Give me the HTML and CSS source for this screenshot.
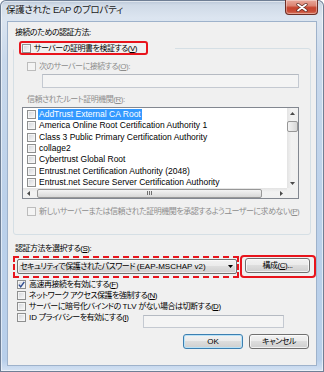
FILE: index.html
```html
<!DOCTYPE html>
<html lang="ja">
<head>
<meta charset="utf-8">
<link rel="stylesheet" href="styles.css">
</head>
<body>
<div class="window">
  <div class="titlebar">
    <span class="title">保護された EAP のプロパティ</span>
    <span class="close"><svg width="12" height="9" viewBox="0 0 12 9"><path d="M2 1.5 L10 7.5 M10 1.5 L2 7.5" stroke="#5a2a22" stroke-width="3.2" stroke-linecap="round"/><path d="M2 1.5 L10 7.5 M10 1.5 L2 7.5" stroke="#ffffff" stroke-width="1.8" stroke-linecap="round"/></svg></span>
  </div>
  <div class="client">
    <div class="caption">接続のための認証方法:</div>
    <div class="group">
      <div class="group-head">
        <div class="mark-solid head-mark">
          <span class="cb"></span><span class="txt">サーバーの証明書を検証する(<u>V</u>)</span>
        </div>
      </div>
      <div class="row in-group dis"><span class="cb dis"></span><span class="txt">次のサーバーに接続する(<u>O</u>):</span></div>
      <div class="input dis server-input"></div>
      <div class="sublabel dis">信頼されたルート証明機関(<u>R</u>):</div>
      <div class="list">
        <div class="list-main">
          <div class="items">
            <div class="item"><span class="cb"></span><span class="itxt sel">AddTrust External CA Root</span></div>
            <div class="item"><span class="cb"></span><span class="itxt">America Online Root Certification Authority 1</span></div>
            <div class="item"><span class="cb"></span><span class="itxt">Class 3 Public Primary Certification Authority</span></div>
            <div class="item"><span class="cb"></span><span class="itxt">collage2</span></div>
            <div class="item"><span class="cb"></span><span class="itxt">Cybertrust Global Root</span></div>
            <div class="item"><span class="cb"></span><span class="itxt">Entrust.net Certification Authority (2048)</span></div>
            <div class="item"><span class="cb"></span><span class="itxt">Entrust.net Secure Server Certification Authority</span></div>
          </div>
          <div class="vscroll">
            <span class="sbtn"><svg width="5" height="3" viewBox="0 0 5 3"><path d="M0 3 L2.5 0 L5 3Z" fill="#4a4a4a"/></svg></span>
            <span class="vthumb"></span>
            <span class="vtrack"></span>
            <span class="sbtn"><svg width="5" height="3" viewBox="0 0 5 3"><path d="M0 0 L2.5 3 L5 0Z" fill="#4a4a4a"/></svg></span>
          </div>
        </div>
        <div class="hscroll">
          <span class="sbtn h"><svg width="3" height="5" viewBox="0 0 3 5"><path d="M3 0 L0 2.5 L3 5Z" fill="#4a4a4a"/></svg></span>
          <span class="htrack"><span class="hthumb"><svg width="5" height="4" viewBox="0 0 5 4"><path d="M0.5 0V4M2.5 0V4M4.5 0V4" stroke="#6f6f6f" stroke-width="1"/></svg></span></span>
          <span class="sbtn h"><svg width="3" height="5" viewBox="0 0 3 5"><path d="M0 0 L3 2.5 L0 5Z" fill="#4a4a4a"/></svg></span>
          <span class="corner"></span>
        </div>
      </div>
      <div class="row in-group dis last"><span class="cb dis"></span><span class="txt">新しいサーバーまたは信頼された証明機関を承認するようユーザーに求めない(<u>P</u>)</span></div>
    </div>
    <div class="caption second">認証方法を選択する(<u>S</u>):</div>
    <div class="method-row">
      <div class="mark-dashed">
        <div class="combo"><span class="txt">セキュリティで保護されたパスワード <span class="lat">(EAP-MSCHAP v2)</span></span><svg class="drop" width="5" height="3" viewBox="0 0 5 3"><path d="M0 0 L2.5 3 L5 0Z" fill="#000"/></svg></div>
      </div>
      <div class="mark-solid btn-mark">
        <div class="btn conf">構成(<u>C</u>)...</div>
      </div>
    </div>
    <div class="row opt"><span class="cb"><svg width="7" height="7" viewBox="0 0 7 7"><path d="M0.8 3.6 L2.7 5.8 L6.3 0.8" stroke="#2f4c8f" stroke-width="1.4" fill="none"/></svg></span><span class="txt">高速再接続を有効にする(<u>F</u>)</span></div>
    <div class="row opt"><span class="cb"></span><span class="txt">ネットワーク アクセス保護を強制する(<u>N</u>)</span></div>
    <div class="row opt"><span class="cb"></span><span class="txt">サーバーに暗号化バインドの <span class="lat">TLV</span> がない場合は切断する(<u>D</u>)</span></div>
    <div class="row opt id-row"><span class="cb"></span><span class="txt"><span class="lat">ID</span> プライバシーを有効にする(<u>I</u>)</span><span class="input dis id-input"></span></div>
    <div class="buttons">
      <div class="btn default"><span class="lat">OK</span></div>
      <div class="btn">キャンセル</div>
    </div>
  </div>
</div>
</body>
</html>
```
FILE: styles.css
```css
* { box-sizing: border-box; margin: 0; padding: 0; }
html, body { width: 324px; height: 372px; overflow: hidden; }
body {
  background: #ffffff;
  font-family: "Liberation Sans", "Noto Sans CJK JP", sans-serif;
  font-size: 8px;
  letter-spacing: -0.5px;
  font-feature-settings: "palt";
  color: #000;
}
u { text-decoration: underline; text-underline-offset: 1px; }
.lat { letter-spacing: 0; }

.window {
  width: 324px;
  height: 372px;
  padding: 0 7px 6px 7px;
  display: flex;
  flex-direction: column;
  border-radius: 6px 6px 0 0;
  background: linear-gradient(to bottom, #b3c1d3 0px, #cfdae7 5px, #dce5f0 18px, #c9d9ec 60px, #bcd1ea 200px, #b8cfea 360px, #d6e3f3 372px);
  box-shadow: inset 0 0 0 1px #6f7f95, inset 0 0 0 2px rgba(255,255,255,0.55);
}

.titlebar {
  height: 21px;
  display: flex;
  align-items: flex-start;
}
.title {
  margin-left: -1px;
  line-height: 20px;
  font-size: 9.5px;
  letter-spacing: -0.3px;
  color: #1b1b1b;
  text-shadow: 0 0 6px rgba(255,255,255,0.9);
}
.close {
  margin-left: auto;
  margin-right: -1px;
  width: 33px;
  height: 15px;
  display: flex;
  align-items: center;
  justify-content: center;
  border: 1px solid #6d2e25;
  border-top: none;
  border-radius: 0 0 4px 4px;
  background: linear-gradient(to bottom, #e9a99b 0%, #dc8574 40%, #c6452f 55%, #c84c37 80%, #d9775f 100%);
  box-shadow: inset 0 0 0 1px rgba(255,255,255,0.35);
}

.client {
  flex: 1;
  background: #f0f0f0;
  border: 1px solid #9eb2cb;
  display: flex;
  flex-direction: column;
}

.caption {
  margin: 5px 0 0 7px;
  line-height: 12px;
  height: 12px;
}
.caption.second { margin-top: 8px; }

.group {
  margin: 9px 5px 0 5px;
  height: 187px;
  border: 1px solid #d5dfe5;
  border-radius: 3px;
  display: flex;
  flex-direction: column;
}
.group-head {
  margin-top: -8px;
  width: 161px;
  height: 14px;
  padding-left: 5px;
  background: #f0f0f0;
  display: flex;
}
.mark-solid {
  border: 2px solid #e8141c;
  border-radius: 3px;
  display: flex;
  align-items: center;
}
.head-mark {
  width: 129px;
  height: 14px;
  padding-left: 1px;
}
.txt { white-space: nowrap; line-height: 11px; }

.cb {
  flex: none;
  width: 9px;
  height: 9px;
  border: 1px solid #8e8f8f;
  background: linear-gradient(135deg, #cfd3d9 0%, #e9eaec 55%, #f8f8f8 100%);
  box-shadow: inset 0 0 0 1px #f5f5f5;
  margin-right: 3px;
  display: flex;
  align-items: center;
  justify-content: center;
}
.cb.dis {
  border-color: #bcbcbc;
  background: #f4f4f4;
  box-shadow: none;
}

.row {
  display: flex;
  align-items: center;
  height: 11px;
}
.dis { color: #8d8d8d; }
.row.in-group { margin-top: 6px; padding-left: 13px; }
.row.in-group.last { margin-top: 7px; }

.input {
  height: 14px;
  border: 1px solid #c4c9d1;
  border-top-color: #b5bac2;
  background: #f4f4f4;
}
.server-input {
  margin: 2px 0 0 28px;
  width: 257px;
}
.sublabel {
  margin-top: 6px;
  padding-left: 13px;
  line-height: 12px;
  height: 12px;
}

.list {
  margin: 1px 0 0 8px;
  width: 277px;
  height: 92px;
  border: 1px solid #828790;
  background: #ffffff;
  display: flex;
  flex-direction: column;
}
.list-main {
  height: 80px;
  display: flex;
}
.items {
  flex: 1;
  overflow: hidden;
  padding-top: 1px;
}
.item {
  height: 11.33px;
  display: flex;
  align-items: center;
  padding-left: 4px;
  white-space: nowrap;
}
.item .cb { margin-right: 2px; }
.itxt {
  padding: 0 1px;
  line-height: 11px;
  font-size: 8.5px;
  letter-spacing: 0;
}
.itxt.sel {
  background: #3399ff;
  color: #fff;
}

.vscroll {
  width: 11px;
  flex: none;
  display: flex;
  flex-direction: column;
  background: linear-gradient(to right, #e3e3e3, #f2f2f2 40%, #f0f0f0);
}
.sbtn {
  flex: none;
  width: 11px;
  height: 11px;
  display: flex;
  align-items: center;
  justify-content: center;
}
.vscroll .sbtn:last-child { height: 9px; }
.vthumb {
  margin: 2px 0 0 0;
  height: 11px;
  border: 1px solid #979797;
  border-radius: 2px;
  background: linear-gradient(to right, #f3f3f3, #e6e6e6 50%, #d7d7d7);
}
.vtrack { flex: 1; }

.hscroll {
  height: 10px;
  display: flex;
  background: linear-gradient(to bottom, #e3e3e3, #f2f2f2 40%, #f0f0f0);
}
.sbtn.h { height: 10px; }
.htrack {
  flex: 1;
  display: flex;
  align-items: center;
  padding-left: 3px;
}
.hthumb {
  width: 225px;
  height: 9px;
  border: 1px solid #979797;
  border-radius: 2px;
  background: linear-gradient(to bottom, #f3f3f3, #e6e6e6 50%, #d7d7d7);
  display: flex;
  align-items: center;
  justify-content: center;
}
.corner {
  width: 11px;
  background: #f0f0f0;
}

.method-row {
  display: flex;
  align-items: flex-start;
  height: 23px;
}
.mark-dashed {
  margin: 1px 0 0 5px;
  width: 226px;
  height: 22px;
  border: 2px dashed #e8141c;
  padding: 1px 0 0 2px;
}
.combo {
  width: 220px;
  height: 15px;
  border: 1px solid #707070;
  border-radius: 2px;
  background: linear-gradient(to bottom, #f2f2f2 0%, #ebebeb 45%, #dddddd 50%, #cfcfcf 100%);
  box-shadow: inset 0 0 0 1px rgba(255,255,255,0.6);
  display: flex;
  align-items: center;
  padding: 0 3px 0 2px;
}
.combo .drop { margin-left: auto; }

.btn-mark {
  margin-left: 1px;
  width: 76px;
  height: 23px;
  border-radius: 4px;
  padding: 1px 0 0 3px;
  align-items: flex-start;
}
.btn {
  height: 15px;
  border: 1px solid #707070;
  border-radius: 3px;
  background: linear-gradient(to bottom, #f2f2f2 0%, #ebebeb 45%, #dddddd 50%, #cfcfcf 100%);
  box-shadow: inset 0 0 0 1px rgba(255,255,255,0.7);
  display: flex;
  align-items: center;
  justify-content: center;
  line-height: 11px;
  white-space: nowrap;
}
.btn.conf { width: 65px; }

.row.opt { padding-left: 9px; }
.method-row + .row.opt { margin-top: 1px; }
.id-row { align-items: flex-start; height: 16px; }
.id-row .cb { margin-top: 1px; }
.id-input {
  margin: 3px 32px 0 auto;
  width: 141px;
  height: 13px;
  background: #f4f4f4;
}

.buttons {
  margin-top: 6px;
  display: flex;
  justify-content: flex-end;
  gap: 6px;
  padding-right: 7px;
}
.buttons .btn { width: 60px; height: 15px; }
.btn.default {
  border-color: #3c7fb1;
  box-shadow: inset 0 0 0 1px #b9e2f7;
}
```
